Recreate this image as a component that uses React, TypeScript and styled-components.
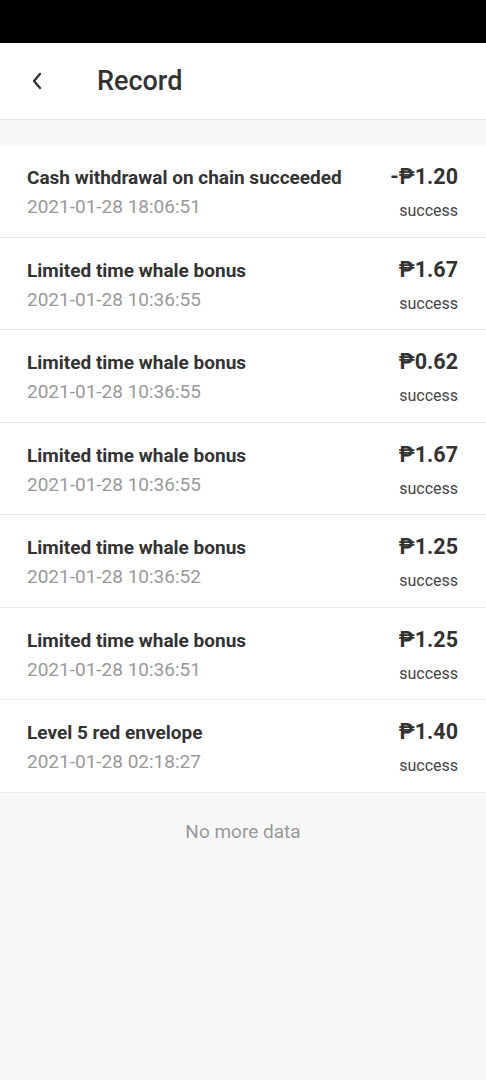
import React from "react";
import styled, { createGlobalStyle } from "styled-components";

interface RecordItem {
  title: string;
  time: string;
  amount: string;
  status: string;
}

const records: RecordItem[] = [
  { title: "Cash withdrawal on chain succeeded", time: "2021-01-28 18:06:51", amount: "-₱1.20", status: "success" },
  { title: "Limited time whale bonus", time: "2021-01-28 10:36:55", amount: "₱1.67", status: "success" },
  { title: "Limited time whale bonus", time: "2021-01-28 10:36:55", amount: "₱0.62", status: "success" },
  { title: "Limited time whale bonus", time: "2021-01-28 10:36:55", amount: "₱1.67", status: "success" },
  { title: "Limited time whale bonus", time: "2021-01-28 10:36:52", amount: "₱1.25", status: "success" },
  { title: "Limited time whale bonus", time: "2021-01-28 10:36:51", amount: "₱1.25", status: "success" },
  { title: "Level 5 red envelope", time: "2021-01-28 02:18:27", amount: "₱1.40", status: "success" },
];

export default function App() {
  return (
    <>
      <GlobalStyle />
      <Page>
        <StatusBar />
        <Header>
          <BackButton aria-label="back">
            <svg width="12" height="18" viewBox="0 0 12 18" fill="none">
              <path d="M9 2L3 9l6 7" stroke="#333" strokeWidth="2.4" strokeLinecap="round" strokeLinejoin="round" />
            </svg>
          </BackButton>
          <Title>Record</Title>
        </Header>
        <List>
          {records.map((r, i) => (
            <Row key={i}>
              <Left>
                <ItemTitle>{r.title}</ItemTitle>
                <Time>{r.time}</Time>
              </Left>
              <Right>
                <Amount>{r.amount}</Amount>
                <Status>{r.status}</Status>
              </Right>
            </Row>
          ))}
        </List>
        <Footer>No more data</Footer>
      </Page>
    </>
  );
}

const GlobalStyle = createGlobalStyle`
  html, body {
    margin: 0;
    padding: 0;
    background: #f7f7f7;
    font-family: Roboto, "Noto Sans", "DejaVu Sans", sans-serif;
  }
`;

const Page = styled.div`
  min-height: 1080px;
  background: #f7f7f7;
  display: flex;
  flex-direction: column;
`;

const StatusBar = styled.div`
  height: 43px;
  background: #000;
`;

const Header = styled.div`
  height: 77px;
  box-sizing: border-box;
  background: #fff;
  border-bottom: 1px solid #e6e6e6;
  display: flex;
  align-items: center;
`;

const BackButton = styled.div`
  width: 97px;
  padding-left: 31px;
  box-sizing: border-box;
  display: flex;
  align-items: center;
`;

const Title = styled.div`
  font-size: 27px;
  color: #333;
  font-weight: 500;
  margin-top: -1px;
`;

const List = styled.div`
  margin-top: 25px;
  background: #fff;
  display: flex;
  flex-direction: column;
`;

const Row = styled.div`
  height: 92.5px;
  box-sizing: border-box;
  border-bottom: 1px solid #ececec;
  padding: 0 28px 0 27px;
  display: flex;
  align-items: flex-start;
  justify-content: space-between;
`;

const Left = styled.div`
  display: flex;
  flex-direction: column;
  padding-top: 21px;
`;

const ItemTitle = styled.div`
  font-size: 19px;
  font-weight: 700;
  color: #333;
  line-height: 24px;
`;

const Time = styled.div`
  font-size: 19px;
  color: #999;
  line-height: 24px;
  margin-top: 5px;
`;

const Right = styled.div`
  display: flex;
  flex-direction: column;
  align-items: flex-end;
  padding-top: 18px;
`;

const Amount = styled.div`
  font-size: 21.5px;
  font-weight: 700;
  color: #333;
  line-height: 28px;
`;

const Status = styled.div`
  font-size: 16px;
  color: #444;
  line-height: 20px;
  margin-top: 10px;
`;

const Footer = styled.div`
  text-align: center;
  font-size: 19px;
  color: #999;
  padding-top: 27px;
`;
